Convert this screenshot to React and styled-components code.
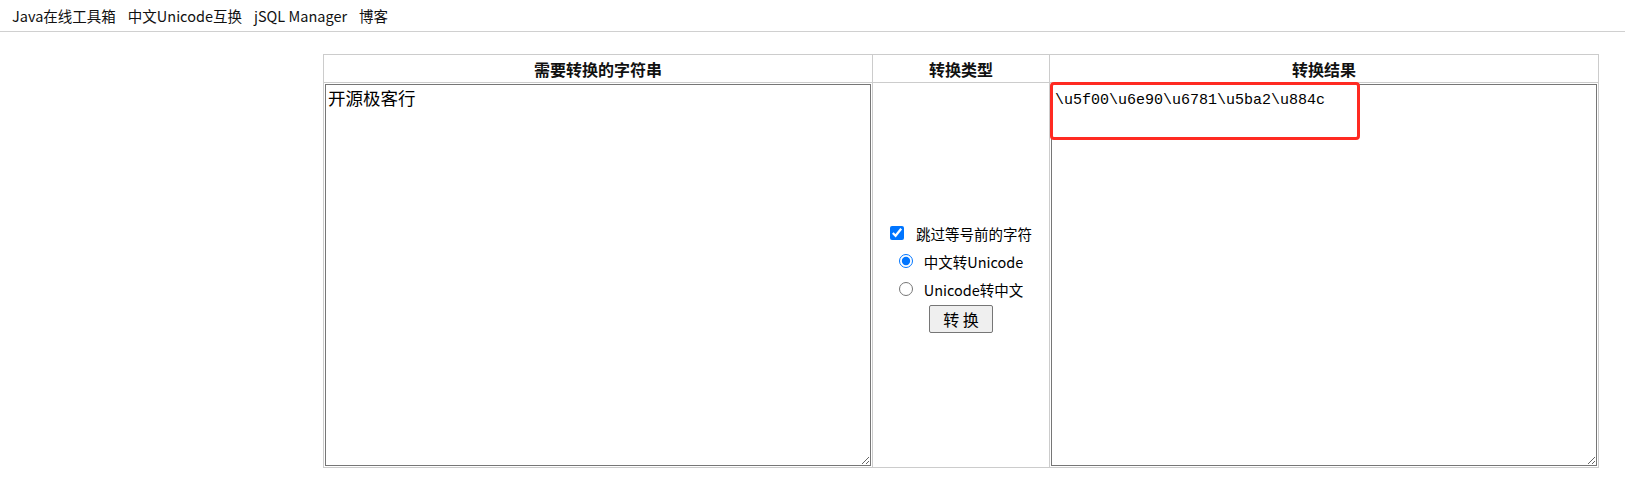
import React from 'react';
import styled, { createGlobalStyle } from 'styled-components';

const GlobalStyle = createGlobalStyle`
  body {
    margin: 0;
    background: #fff;
    color: #000;
    font-family: "Noto Sans CJK SC", "Noto Sans", sans-serif;
  }
`;

const Nav = styled.nav`
  display: flex;
  align-items: center;
  gap: 12px;
  height: 31px;
  padding: 0 12px;
  border-bottom: 1px solid #d0d0d0;
  font-size: 14.5px;
`;

const NavLink = styled.a`
  color: #111;
  text-decoration: none;
`;

const Table = styled.table`
  border-collapse: collapse;
  table-layout: fixed;
  width: 1276px;
  margin: 22px 0 0 323px;
  border: 1px solid #ccc;
`;

const HeadCell = styled.th`
  height: 27px;
  padding: 0;
  border: 1px solid #ccc;
  font-size: 16px;
  font-weight: 700;
  color: #111;
`;

const Cell = styled.td`
  padding: 1px;
  border: 1px solid #ccc;
  text-align: center;
  vertical-align: middle;
`;

const Field = styled.div`
  position: relative;
`;

const TextArea = styled.textarea`
  display: block;
  width: 100%;
  height: 382px;
  box-sizing: border-box;
  margin: 0;
  padding: ${p => (p.$mono ? '7px 2px 2px 3px' : '0 2px 2px')};
  border: 1px solid #767676;
  color: #000;
  font-family: ${p => (p.$mono ? '"Liberation Mono", monospace' : '"Noto Sans CJK SC", sans-serif')};
  font-size: ${p => (p.$mono ? '15px' : '17.5px')};
`;

const Highlight = styled.div`
  position: absolute;
  left: -1px;
  top: -2px;
  width: 310px;
  height: 58px;
  box-sizing: border-box;
  border: 3px solid #ff2a22;
  border-radius: 4px;
  pointer-events: none;
`;

const Options = styled.div`
  display: flex;
  flex-direction: column;
  align-items: center;
  padding-top: 2px;
  font-size: 14.5px;
`;

const OptionRow = styled.label`
  display: flex;
  align-items: center;
  gap: ${p => p.$gap || 11}px;
  height: 28px;
  color: #000;
`;

const Check = styled.input`
  width: 14px;
  height: 14px;
  margin: 0;
  accent-color: #0075ff;
`;

const Button = styled.button`
  height: 28px;
  margin-top: 2px;
  padding: 0 13px;
  border: 1px solid #767676;
  border-radius: 2px;
  background: #efefef;
  color: #000;
  font-family: "Noto Sans CJK SC", sans-serif;
  font-size: 16px;
`;

export default function App() {
  return (
    <>
      <GlobalStyle />
      <Nav>
        <NavLink href="#">Java在线工具箱</NavLink>
        <NavLink href="#">中文Unicode互换</NavLink>
        <NavLink href="#">jSQL Manager</NavLink>
        <NavLink href="#">博客</NavLink>
      </Nav>
      <Table>
        <colgroup>
          <col style={{ width: 549 }} />
          <col style={{ width: 177 }} />
          <col style={{ width: 549 }} />
        </colgroup>
        <thead>
          <tr>
            <HeadCell>需要转换的字符串</HeadCell>
            <HeadCell>转换类型</HeadCell>
            <HeadCell>转换结果</HeadCell>
          </tr>
        </thead>
        <tbody>
          <tr>
            <Cell>
              <Field>
                <TextArea defaultValue="开源极客行" />
              </Field>
            </Cell>
            <Cell>
              <Options>
                <OptionRow $gap={12}>
                  <Check type="checkbox" defaultChecked />
                  跳过等号前的字符
                </OptionRow>
                <OptionRow>
                  <Check type="radio" name="mode" defaultChecked />
                  中文转Unicode
                </OptionRow>
                <OptionRow>
                  <Check type="radio" name="mode" />
                  Unicode转中文
                </OptionRow>
                <Button type="button">转&nbsp;换</Button>
              </Options>
            </Cell>
            <Cell>
              <Field>
                <TextArea $mono defaultValue={'\\u5f00\\u6e90\\u6781\\u5ba2\\u884c'} />
                <Highlight />
              </Field>
            </Cell>
          </tr>
        </tbody>
      </Table>
    </>
  );
}
